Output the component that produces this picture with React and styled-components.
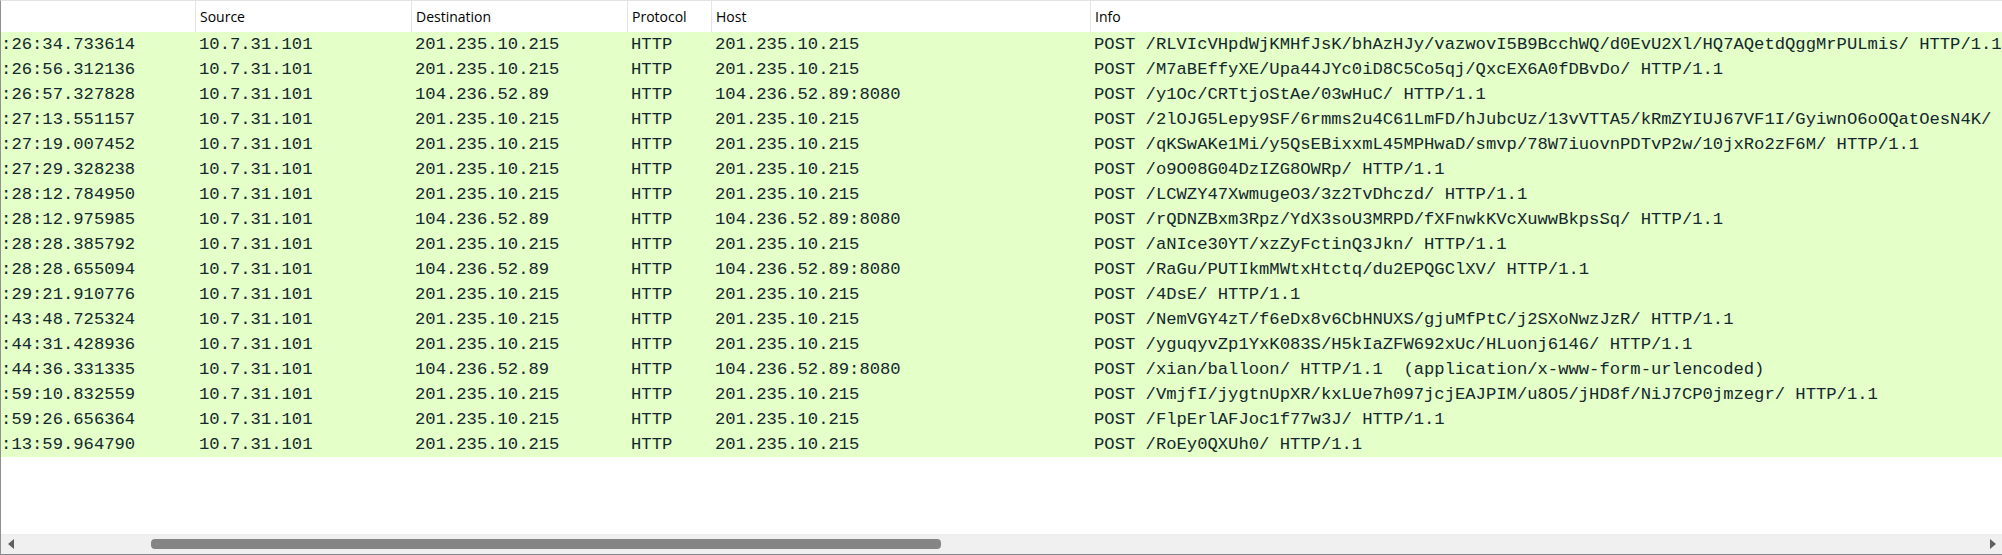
import React, { useLayoutEffect, useRef } from "react";
import styled, { createGlobalStyle } from "styled-components";

const GlobalStyle = createGlobalStyle`
  html, body { margin: 0; padding: 0; background: #ffffff; }
  #root { width: 2002px; height: 555px; }
`;

const COLS = "332px 216px 216px 84px 379px 2600px";
const SCROLL_X = 138;

const Frame = styled.div`
  box-sizing: border-box;
  width: 2002px;
  height: 555px;
  display: flex;
  flex-direction: column;
  background: #ffffff;
  border-top: 1px solid #e3e3e3;
  border-left: 1px solid #8f8f8f;
  border-bottom: 1px solid #828790;
`;

const Viewport = styled.div`
  flex: 1;
  min-height: 0;
  overflow: hidden;
`;

const Table = styled.div`
  width: max-content;
`;

const HeaderRow = styled.div`
  display: grid;
  grid-template-columns: ${COLS};
  height: 31px;
  background: #ffffff;
`;

const HeaderCell = styled.div`
  display: flex;
  align-items: center;
  padding-left: 4px;
  border-left: 1px solid ${(p) => (p.$first ? "transparent" : "#e5e5e5")};
  font-family: "Open Sans", "Noto Sans", sans-serif;
  font-size: 14px;
  color: #000000;
  white-space: nowrap;
`;

const PacketRow = styled.div`
  display: grid;
  grid-template-columns: ${COLS};
  height: 25px;
  background: #e4ffc7;
  color: #12272e;
  font-family: "Liberation Mono", "DejaVu Sans Mono", monospace;
  font-size: 17.2px;
`;

const Cell = styled.div`
  display: flex;
  align-items: center;
  padding-left: 4px;
  white-space: pre;
  overflow: ${(p) => (p.$wide ? "visible" : "hidden")};
`;

const Scrollbar = styled.div`
  height: 20px;
  display: flex;
  align-items: center;
  background: #f0f0f0;
`;

const ArrowButton = styled.div`
  width: 20px;
  height: 20px;
  display: flex;
  align-items: center;
  justify-content: center;
`;

const Track = styled.div`
  flex: 1;
  height: 20px;
  display: flex;
  align-items: center;
`;

const Thumb = styled.div`
  height: 10px;
  border-radius: 4px;
  background: #858585;
`;

const columns = ["Time", "Source", "Destination", "Protocol", "Host", "Info"];

const A = "201.235.10.215";
const B = "104.236.52.89";
const BH = "104.236.52.89:8080";

const packets = [
  ["2019-01-29 23:26:34.733614", A, A, "POST /RLVIcVHpdWjKMHfJsK/bhAzHJy/vazwovI5B9BcchWQ/d0EvU2Xl/HQ7AQetdQggMrPULmis/ HTTP/1.1"],
  ["2019-01-29 23:26:56.312136", A, A, "POST /M7aBEffyXE/Upa44JYc0iD8C5Co5qj/QxcEX6A0fDBvDo/ HTTP/1.1"],
  ["2019-01-29 23:26:57.327828", B, BH, "POST /y1Oc/CRTtjoStAe/03wHuC/ HTTP/1.1"],
  ["2019-01-29 23:27:13.551157", A, A, "POST /2lOJG5Lepy9SF/6rmms2u4C61LmFD/hJubcUz/13vVTTA5/kRmZYIUJ67VF1I/GyiwnO6oOQatOesN4K/ HTTP/1.1"],
  ["2019-01-29 23:27:19.007452", A, A, "POST /qKSwAKe1Mi/y5QsEBixxmL45MPHwaD/smvp/78W7iuovnPDTvP2w/10jxRo2zF6M/ HTTP/1.1"],
  ["2019-01-29 23:27:29.328238", A, A, "POST /o9O08G04DzIZG8OWRp/ HTTP/1.1"],
  ["2019-01-29 23:28:12.784950", A, A, "POST /LCWZY47XwmugeO3/3z2TvDhczd/ HTTP/1.1"],
  ["2019-01-29 23:28:12.975985", B, BH, "POST /rQDNZBxm3Rpz/YdX3soU3MRPD/fXFnwkKVcXuwwBkpsSq/ HTTP/1.1"],
  ["2019-01-29 23:28:28.385792", A, A, "POST /aNIce30YT/xzZyFctinQ3Jkn/ HTTP/1.1"],
  ["2019-01-29 23:28:28.655094", B, BH, "POST /RaGu/PUTIkmMWtxHtctq/du2EPQGClXV/ HTTP/1.1"],
  ["2019-01-29 23:29:21.910776", A, A, "POST /4DsE/ HTTP/1.1"],
  ["2019-01-29 23:43:48.725324", A, A, "POST /NemVGY4zT/f6eDx8v6CbHNUXS/gjuMfPtC/j2SXoNwzJzR/ HTTP/1.1"],
  ["2019-01-29 23:44:31.428936", A, A, "POST /yguqyvZp1YxK083S/H5kIaZFW692xUc/HLuonj6146/ HTTP/1.1"],
  ["2019-01-29 23:44:36.331335", B, BH, "POST /xian/balloon/ HTTP/1.1  (application/x-www-form-urlencoded)"],
  ["2019-01-29 23:59:10.832559", A, A, "POST /VmjfI/jygtnUpXR/kxLUe7h097jcjEAJPIM/u8O5/jHD8f/NiJ7CP0jmzegr/ HTTP/1.1"],
  ["2019-01-29 23:59:26.656364", A, A, "POST /FlpErlAFJoc1f77w3J/ HTTP/1.1"],
  ["2019-01-30 00:13:59.964790", A, A, "POST /RoEy0QXUh0/ HTTP/1.1"],
];

const thumb = { start: 0.0663, size: 0.4028 };

function Arrow({ dir }) {
  return (
    <svg width="7" height="10" viewBox="0 0 7 10">
      {dir === "left" ? (
        <polygon points="6,0 6,10 0,5" fill="#606060" />
      ) : (
        <polygon points="1,0 1,10 7,5" fill="#606060" />
      )}
    </svg>
  );
}

export default function App() {
  const viewRef = useRef(null);
  useLayoutEffect(() => {
    if (viewRef.current) viewRef.current.scrollLeft = SCROLL_X;
  }, []);

  return (
    <>
      <GlobalStyle />
      <Frame>
        <Viewport ref={viewRef}>
          <Table>
            <HeaderRow>
              {columns.map((c, i) => (
                <HeaderCell key={c} $first={i === 0}>
                  {c}
                </HeaderCell>
              ))}
            </HeaderRow>
            {packets.map((p, i) => (
              <PacketRow key={i}>
                <Cell>{p[0]}</Cell>
                <Cell>10.7.31.101</Cell>
                <Cell>{p[1]}</Cell>
                <Cell>HTTP</Cell>
                <Cell>{p[2]}</Cell>
                <Cell $wide>{p[3]}</Cell>
              </PacketRow>
            ))}
          </Table>
        </Viewport>
        <Scrollbar>
          <ArrowButton>
            <Arrow dir="left" />
          </ArrowButton>
          <Track>
            <Thumb
              style={{
                marginLeft: `${thumb.start * 100}%`,
                width: `${thumb.size * 100}%`,
              }}
            />
          </Track>
          <ArrowButton>
            <Arrow dir="right" />
          </ArrowButton>
        </Scrollbar>
      </Frame>
    </>
  );
}
